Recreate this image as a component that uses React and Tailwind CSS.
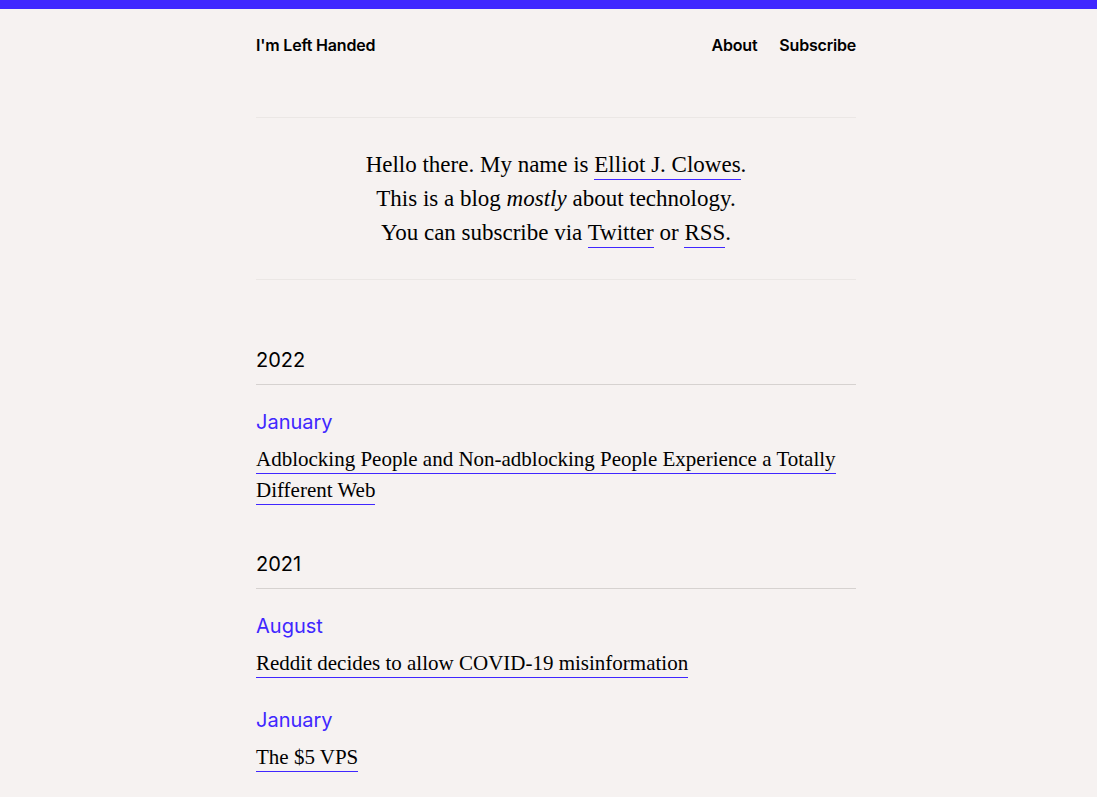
import React from 'react';

const sans = "font-['Inter','Liberation_Sans',sans-serif]";
const serif = "font-['Liberation_Serif','DejaVu_Serif',serif]";

const archive = [
  {
    year: '2022',
    months: [
      {
        month: 'January',
        posts: ['Adblocking People and Non-adblocking People Experience a Totally Different Web'],
      },
    ],
  },
  {
    year: '2021',
    months: [
      { month: 'August', posts: ['Reddit decides to allow COVID-19 misinformation'] },
      { month: 'January', posts: ['The $5 VPS'] },
    ],
  },
];

const Link = ({ children }) => (
  <a
    href="#"
    className="text-black no-underline border-b border-[#4027ff] pb-[2px]"
  >
    {children}
  </a>
);

const App = () => {
  return (
    <div className="min-h-[797px] bg-[#f6f2f1] text-black">
      <div className="h-[9px] bg-[#4027ff]"></div>
      <div className="pl-[15px]">
        <div className="w-[600px] mx-auto">
          <header className={`flex items-center justify-between h-[70px] pt-[1px] ${sans}`}>
            <a href="#" className="text-[16px] font-semibold tracking-[-0.2px]">
              I'm Left Handed
            </a>
            <nav className="flex gap-[22px] text-[16px] font-semibold tracking-[-0.2px]">
              <a href="#">About</a>
              <a href="#">Subscribe</a>
            </nav>
          </header>

          <div className="mt-[38px] border-t border-[#ebe7e5]"></div>
          <div className={`pt-[30px] pb-[29px] text-center text-[23px] leading-[34px] ${serif}`}>
            <p>
              Hello there. My name is <Link>Elliot J. Clowes</Link>.
            </p>
            <p>
              This is a blog <em>mostly</em> about technology.
            </p>
            <p>
              You can subscribe via <Link>Twitter</Link> or <Link>RSS</Link>.
            </p>
          </div>
          <div className="border-t border-[#ebe7e5]"></div>

          <main className="pt-[65px]">
            {archive.map((y) => (
              <section key={y.year} className="mb-[43px]">
                <h2 className={`text-[20px] leading-[30px] pb-[9px] border-b border-[#d6d2d0] ${sans}`}>
                  {y.year}
                </h2>
                {y.months.map((m, i) => (
                  <div key={i} className={i === 0 ? 'mt-[22px]' : 'mt-[26px]'}>
                    <h3 className={`text-[20px] leading-[30px] text-[#4027ff] ${sans}`}>{m.month}</h3>
                    <ul className={`mt-[7px] text-[21px] leading-[31px] ${serif}`}>
                      {m.posts.map((p) => (
                        <li key={p}>
                          <Link>{p}</Link>
                        </li>
                      ))}
                    </ul>
                  </div>
                ))}
              </section>
            ))}
          </main>
        </div>
      </div>
    </div>
  );
};

export default App;
